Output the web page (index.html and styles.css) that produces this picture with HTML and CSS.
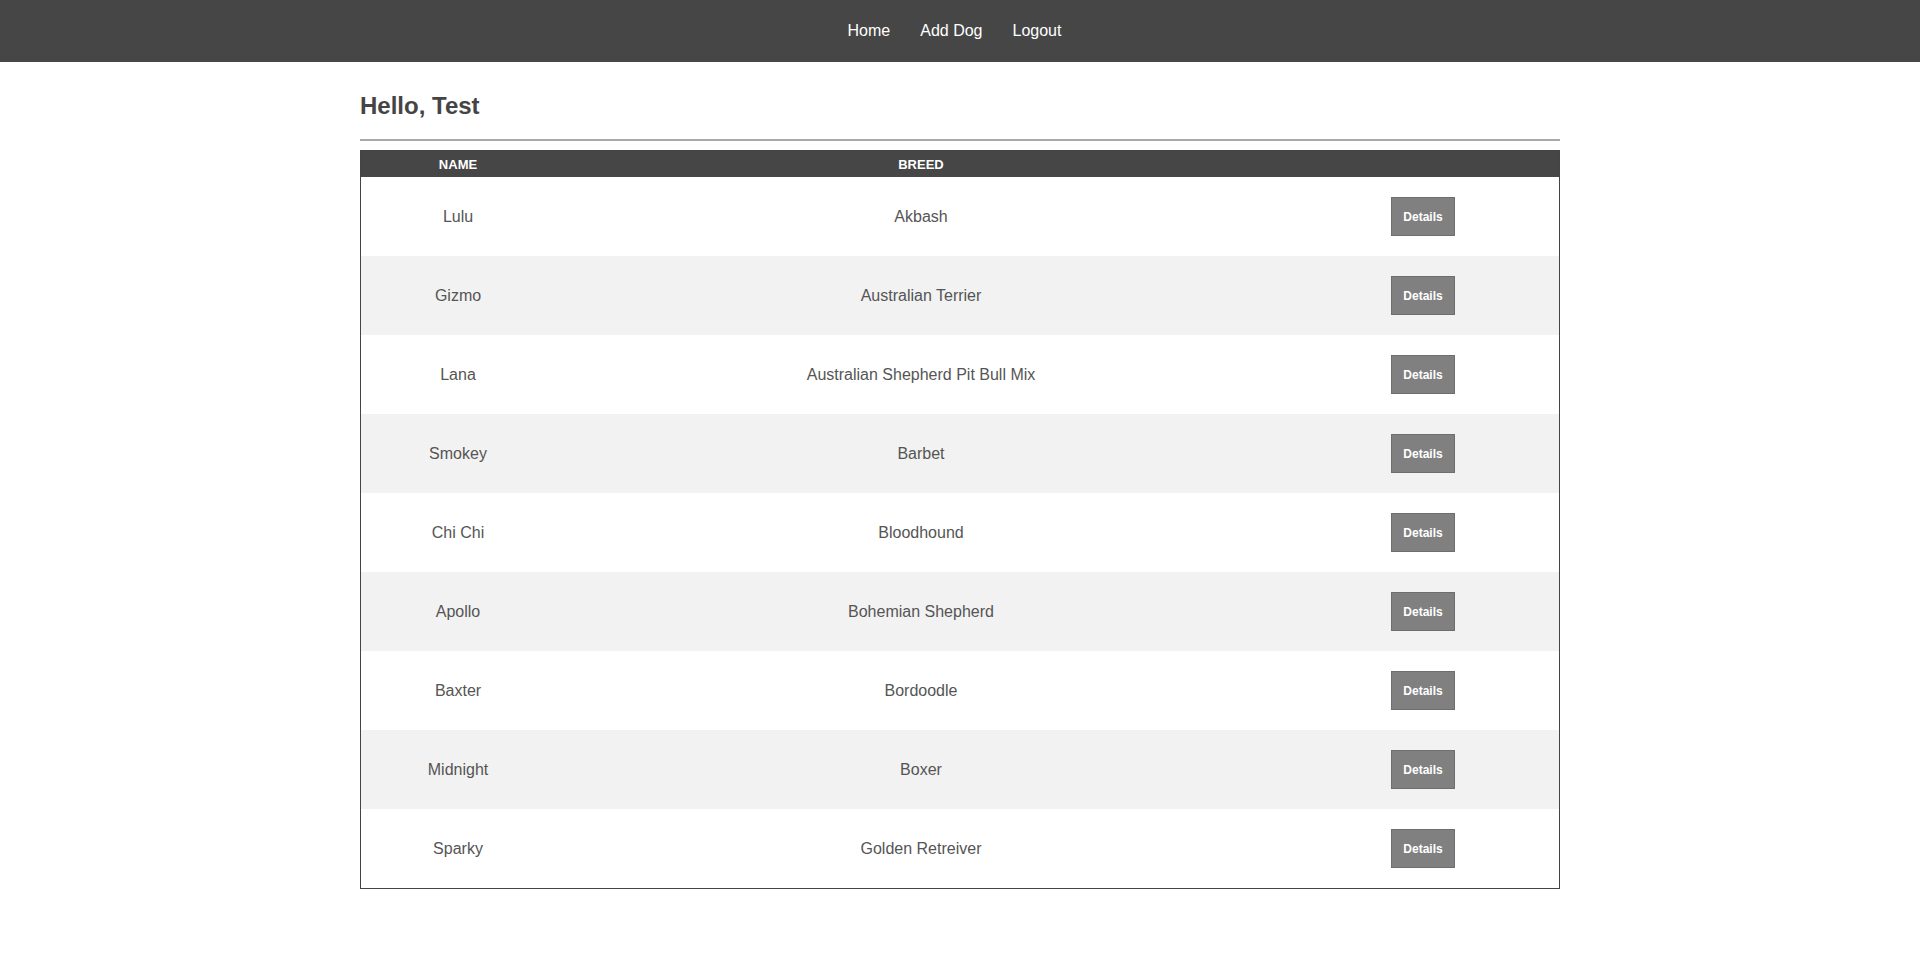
FILE: index.html
```html
<!DOCTYPE html>
<html>
<head>
<meta charset="utf-8">
<title>Dogs</title>
<link rel="stylesheet" href="styles.css">
</head>
<body>
<nav class="topnav">
  <ul class="nav-list">
    <li><a href="#" class="nav-link">Home</a></li>
    <li><a href="#" class="nav-link">Add Dog</a></li>
    <li><a href="#" class="nav-link">Logout</a></li>
  </ul>
</nav>
<main class="content">
  <h2 class="greeting">Hello, Test</h2>
  <hr class="divider">
  <table class="dogs">
    <colgroup>
      <col class="col-name">
      <col class="col-breed">
      <col class="col-action">
    </colgroup>
    <thead>
      <tr><th>Name</th><th>Breed</th><th></th></tr>
    </thead>
    <tbody>
      <tr><td>Lulu</td><td>Akbash</td><td><button class="details">Details</button></td></tr>
      <tr><td>Gizmo</td><td>Australian Terrier</td><td><button class="details">Details</button></td></tr>
      <tr><td>Lana</td><td>Australian Shepherd Pit Bull Mix</td><td><button class="details">Details</button></td></tr>
      <tr><td>Smokey</td><td>Barbet</td><td><button class="details">Details</button></td></tr>
      <tr><td>Chi Chi</td><td>Bloodhound</td><td><button class="details">Details</button></td></tr>
      <tr><td>Apollo</td><td>Bohemian Shepherd</td><td><button class="details">Details</button></td></tr>
      <tr><td>Baxter</td><td>Bordoodle</td><td><button class="details">Details</button></td></tr>
      <tr><td>Midnight</td><td>Boxer</td><td><button class="details">Details</button></td></tr>
      <tr><td>Sparky</td><td>Golden Retreiver</td><td><button class="details">Details</button></td></tr>
    </tbody>
  </table>
</main>
</body>
</html>
```
FILE: styles.css
```css
* { box-sizing: border-box; }
html, body {
  margin: 0;
  padding: 0;
  background: #fff;
  font-family: "Liberation Sans", Arial, sans-serif;
  color: #555;
}
.topnav {
  height: 62px;
  background: #464646;
}
.nav-list {
  list-style: none;
  margin: 0;
  padding: 0 11px 0 0;
  height: 62px;
  display: flex;
  justify-content: center;
  align-items: center;
  gap: 30px;
}
.nav-link {
  color: #fff;
  text-decoration: none;
  font-size: 16px;
  line-height: 62px;
  display: block;
}
.content {
  width: 1200px;
  margin: 0 auto;
}
.greeting {
  margin: 30px 0 19px;
  font-size: 24px;
  font-weight: bold;
  color: #444;
  line-height: 28px;
}
.divider {
  margin: 0 0 9px;
  border: 0;
  border-top: 2px solid #a9a9a9;
  height: 0;
}
.dogs {
  width: 1200px;
  border-collapse: separate;
  border-spacing: 0;
  table-layout: fixed;
  border: 1px solid #444;
}
.col-name { width: 194px; }
.col-breed { width: 732px; }
.col-action { width: 272px; }
.dogs th {
  background: #464646;
  color: #fff;
  font-size: 13px;
  font-weight: bold;
  text-transform: uppercase;
  height: 26px;
  padding: 0;
  text-align: center;
  vertical-align: middle;
}
.dogs td {
  height: 79px;
  padding: 0;
  text-align: center;
  vertical-align: middle;
  font-size: 16px;
  color: #555;
}
.dogs tbody tr:nth-child(even) td {
  background: #f2f2f2;
}
.details {
  width: 64px;
  height: 39px;
  background: #808080;
  color: #fff;
  border: 1px solid #6e6e6e;
  font-family: "Liberation Sans", Arial, sans-serif;
  font-size: 12px;
  font-weight: bold;
  padding: 0;
  cursor: pointer;
  vertical-align: middle;
}
```
